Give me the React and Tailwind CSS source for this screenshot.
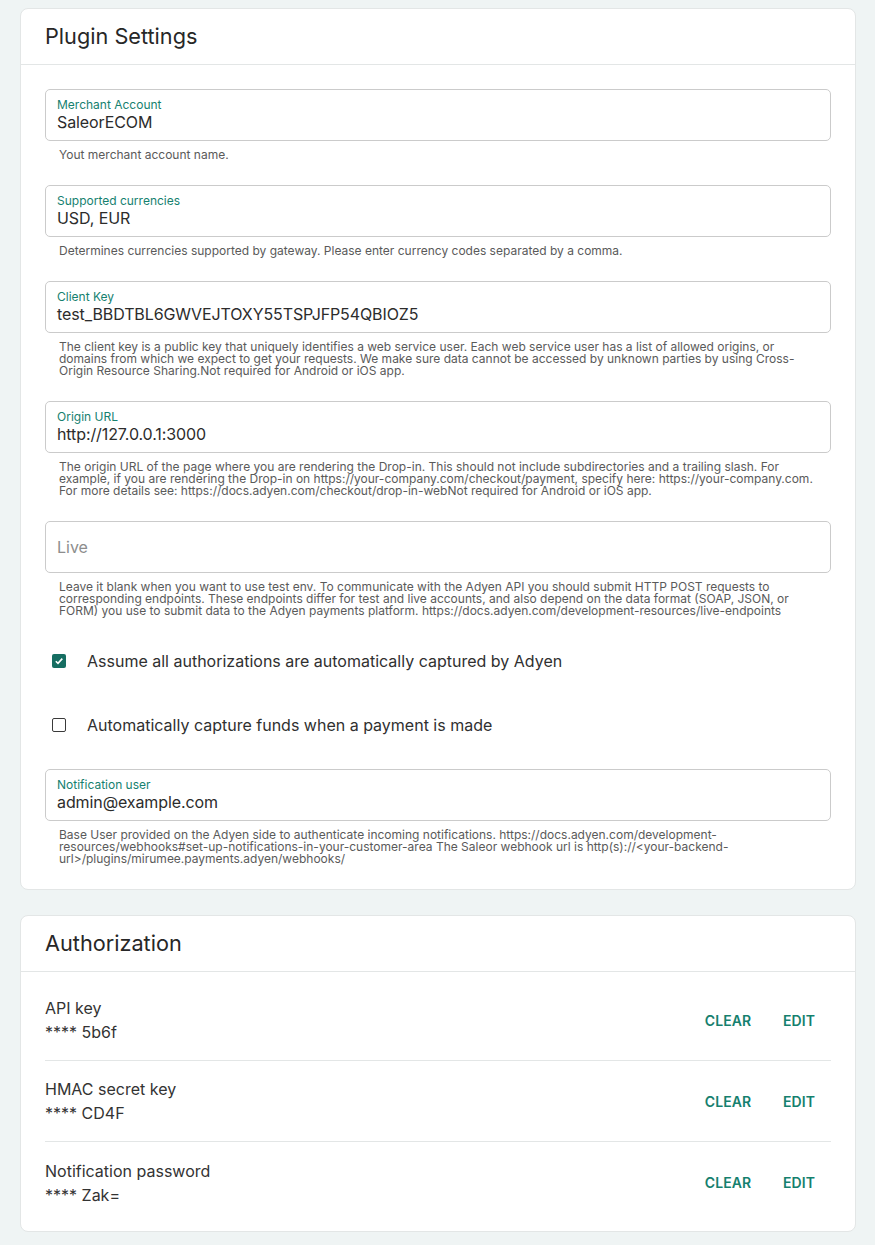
const FIELDS = [
  { label: 'Merchant Account', value: 'SaleorECOM', help: ['Yout merchant account name.'] },
  {
    label: 'Supported currencies',
    value: 'USD, EUR',
    help: ['Determines currencies supported by gateway. Please enter currency codes separated by a comma.'],
  },
  {
    label: 'Client Key',
    value: 'test_BBDTBL6GWVEJTOXY55TSPJFP54QBIOZ5',
    help: [
      'The client key is a public key that uniquely identifies a web service user. Each web service user has a list of allowed origins, or',
      'domains from which we expect to get your requests. We make sure data cannot be accessed by unknown parties by using Cross-',
      'Origin Resource Sharing.Not required for Android or iOS app.',
    ],
  },
  {
    label: 'Origin URL',
    value: 'http://127.0.0.1:3000',
    help: [
      'The origin URL of the page where you are rendering the Drop-in. This should not include subdirectories and a trailing slash. For',
      'example, if you are rendering the Drop-in on https://your-company.com/checkout/payment, specify here: https://your-company.com.',
      'For more details see: https://docs.adyen.com/checkout/drop-in-webNot required for Android or iOS app.',
    ],
  },
  {
    placeholder: 'Live',
    help: [
      'Leave it blank when you want to use test env. To communicate with the Adyen API you should submit HTTP POST requests to',
      'corresponding endpoints. These endpoints differ for test and live accounts, and also depend on the data format (SOAP, JSON, or',
      'FORM) you use to submit data to the Adyen payments platform. https://docs.adyen.com/development-resources/live-endpoints',
    ],
  },
]

const NOTIFICATION_FIELD = {
  label: 'Notification user',
  value: 'admin@example.com',
  help: [
    'Base User provided on the Adyen side to authenticate incoming notifications. https://docs.adyen.com/development-',
    'resources/webhooks#set-up-notifications-in-your-customer-area The Saleor webhook url is http(s)://<your-backend-',
    'url>/plugins/mirumee.payments.adyen/webhooks/',
  ],
}

const SECRETS = [
  { name: 'API key', value: '**** 5b6f' },
  { name: 'HMAC secret key', value: '**** CD4F' },
  { name: 'Notification password', value: '**** Zak=' },
]

function Field({ field }) {
  return (
    <div>
      <div className="h-[52px] rounded-[5px] border border-[#cbcbcb] px-[11px] flex flex-col justify-center">
        {field.label ? (
          <>
            <span className="text-[12px] leading-[14px] text-[#16816f]">{field.label}</span>
            <span className="text-[16px] leading-[20px] text-[#2c2c2c] tracking-[-0.1px]">{field.value}</span>
          </>
        ) : (
          <span className="text-[16px] leading-[20px] text-[#8d8d8d]">{field.placeholder}</span>
        )}
      </div>
      <div className="mt-2 px-[14px] text-[12px] leading-[12px] text-[#5a5a5a]">
        {field.help.map((line) => (
          <div key={line} className="whitespace-nowrap">
            {line}
          </div>
        ))}
      </div>
    </div>
  )
}

function CheckRow({ checked, label }) {
  return (
    <div className="h-10 flex items-center">
      <div className="w-[42px] pl-[7px] flex">
        {checked ? (
          <span className="w-[14px] h-[14px] rounded-[2px] bg-[#166e62] flex items-center justify-center">
            <svg width="10" height="10" viewBox="0 0 10 10">
              <path d="M1.8 5.2 L4 7.4 L8.3 2.6" stroke="white" strokeWidth="1.6" fill="none" />
            </svg>
          </span>
        ) : (
          <span className="w-[14px] h-[14px] rounded-[2px] border border-[#3a3a3a]" />
        )}
      </div>
      <span className="text-[16px] text-[#303030]">{label}</span>
    </div>
  )
}

function CardHeader({ title }) {
  return (
    <div className="h-[56px] px-6 flex items-center border-b border-[#e3e6e6]">
      <h2 className="text-[21.7px] text-[#272727]">{title}</h2>
    </div>
  )
}

export default function App() {
  return (
    <div
      className="min-h-[1245px] bg-[#eff4f4] pl-5 pr-[19px] pt-2 pb-4 flex flex-col gap-[25px]"
      style={{ fontFamily: 'Inter, "Noto Sans", sans-serif' }}
    >
      <section className="bg-white rounded-[8px] border border-[#e3e6e6]">
        <CardHeader title="Plugin Settings" />
        <div className="px-6 py-6 flex flex-col gap-6">
          {FIELDS.map((f) => (
            <Field key={f.label || f.placeholder} field={f} />
          ))}
          <CheckRow checked label="Assume all authorizations are automatically captured by Adyen" />
          <CheckRow label="Automatically capture funds when a payment is made" />
          <Field field={NOTIFICATION_FIELD} />
        </div>
      </section>

      <section className="bg-white rounded-[8px] border border-[#e3e6e6]">
        <CardHeader title="Authorization" />
        <div className="py-2">
          {SECRETS.map((s, i) => (
            <div
              key={s.name}
              className={`mx-6 h-[81px] flex items-center ${
                i < SECRETS.length - 1 ? 'border-b border-[#e3e6e6]' : ''
              }`}
            >
              <div className="flex-1 flex flex-col gap-[2px]">
                <span className="text-[16px] leading-[22px] text-[#333]">{s.name}</span>
                <span className="text-[16px] leading-[22px] text-[#333]">{s.value}</span>
              </div>
              <button className="text-[14px] font-semibold tracking-[0.05px] text-[#15806e] px-2 mr-[16px]">CLEAR</button>
              <button className="text-[14px] font-semibold tracking-[0.05px] text-[#15806e] px-2 mr-2">EDIT</button>
            </div>
          ))}
        </div>
      </section>
    </div>
  )
}
